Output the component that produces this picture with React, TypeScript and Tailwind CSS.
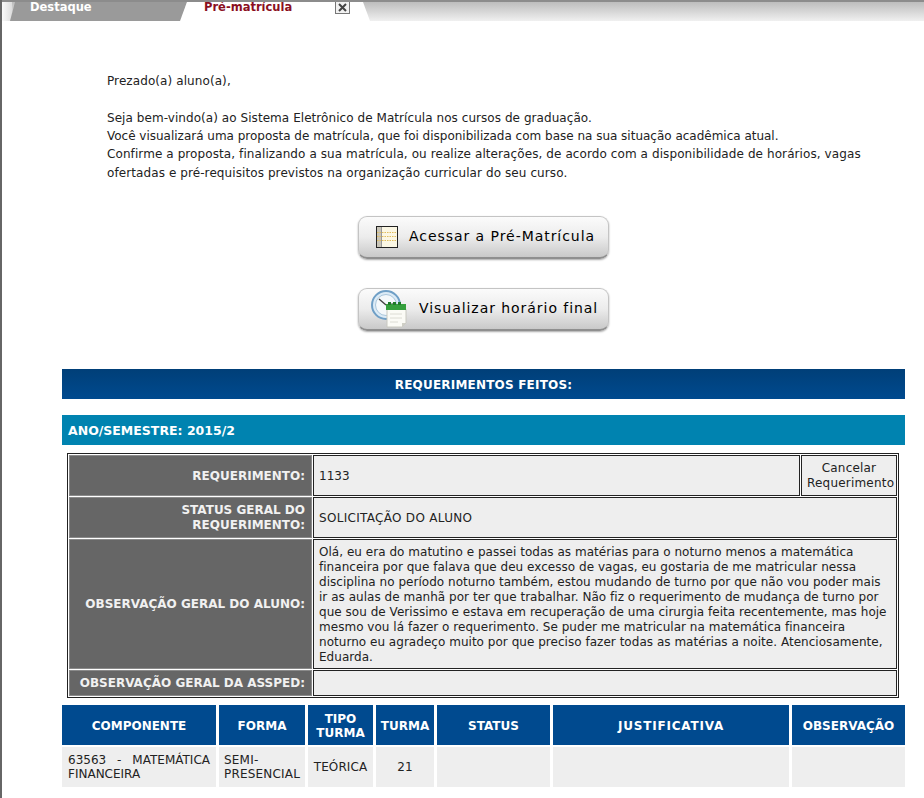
import React from 'react';

const font = { fontFamily: '"DejaVu Sans", Verdana, sans-serif' };

const NotebookIcon = () => (
  <svg width="22" height="22" viewBox="0 0 22 22" className="shrink-0">
    <rect x="0.5" y="0.5" width="21" height="21" fill="#fbf7e4" stroke="#222" />
    <rect x="1" y="1" width="4" height="20" fill="#c9c5b8" />
    <path d="M1 6.5h20M1 10.5h20M1 14.5h20" stroke="#e0bd5c" strokeDasharray="1.5 1" />
    <path d="M5.5 1v20" stroke="#999" />
  </svg>
);

const ClockCalendarIcon = () => (
  <svg width="36" height="38" viewBox="0 0 36 38" className="shrink-0">
    <circle cx="15" cy="15" r="14" fill="#dcebf6" stroke="#6f9fc6" strokeWidth="2" />
    <circle cx="15" cy="15" r="10.5" fill="#f4f8fb" stroke="#a9c6dc" />
    <path d="M15 15L8 9M15 15l8-1" stroke="#444" strokeWidth="1.4" />
    <path d="M16 19h19v14l-4 4H16z" fill="#fbfbf6" stroke="#c8c8c0" />
    <path d="M15 14h20v6H15z" fill="#35a03e" />
    <path d="M17 12h3v3h-3zM22 12h3v3h-3zM27 12h3v3h-3z" fill="#1f7a2a" />
    <path d="M19 24h12M19 28h12M19 32h8" stroke="#dcdcd4" />
    <path d="M31 37v-4h4z" fill="#cfcfc6" />
  </svg>
);

const MenuButton = ({ icon, label, iconClass, gap }: { icon: React.ReactNode; label: string; iconClass: string; gap: string }) => (
  <button className="w-[251px] h-[43px] flex items-center rounded-[9px] border border-[#c4c4c4] border-b-[#8f8f8f] border-b-2 bg-gradient-to-b from-[#fbfbfb] via-[#ececec] to-[#c9c9c9] shadow-[0_1px_2px_rgba(0,0,0,0.35)]">
    <span className={iconClass}>{icon}</span>
    <span className={`${gap} text-[14px] tracking-[0.95px] text-black whitespace-nowrap`}>{label}</span>
  </button>
);

const columns = [
  { title: 'COMPONENTE', extra: '' },
  { title: 'FORMA', extra: '' },
  { title: 'TIPO TURMA', extra: '' },
  { title: 'TURMA', extra: '' },
  { title: 'STATUS', extra: '' },
  { title: 'JUSTIFICATIVA', extra: 'tracking-[0.8px]' },
  { title: 'OBSERVAÇÃO', extra: '' },
];

const labelCell = 'bg-[#666666] text-[#f1f1f1] font-bold text-right align-middle pl-[5px] pr-[6px] pt-[2px] leading-[15px] border border-[#8a8a8a]';
const valueCell = 'bg-[#eeeeee] text-[#222] align-middle px-[5px] pt-[2px] border border-[#222]';

export default function App() {
  return (
    <div className="min-h-screen w-[924px] h-[798px] overflow-hidden bg-white text-[12px] border-l-2 border-[#666]" style={font}>
      <div className="flex h-[21px] border-t-2 border-[#8c8c8c] bg-gradient-to-b from-[#bdbdbd] to-[#f0f0f0] -ml-[2px] relative">
        <div className="w-[12px] bg-gradient-to-r from-[#ffffff] to-[#dddddd]" />
        <div className="w-[177px] bg-[#9a9a9a] [clip-path:polygon(0_100%,5px_0,100%_0,calc(100%-6px)_100%)] -ml-[2px] text-white font-bold text-[11.5px] pl-[20px] leading-[10px]">
          Destaque
        </div>
        <div className="relative w-[190px] bg-white [clip-path:polygon(0_100%,7px_0,calc(100%-7px)_0,100%_100%)] -ml-[7px] text-[#8b0f1f] font-bold text-[11.5px] pl-[24px] leading-[10px]">
          Pré-matrícula
          <span className="absolute left-[155px] top-0 w-[15px] h-[12px] border border-[#777] border-t-0 bg-[#f2f2f2] flex items-center justify-center">
            <svg width="9" height="9" viewBox="0 0 9 9">
              <path d="M1 1l7 7M8 1L1 8" stroke="#444" strokeWidth="2" />
            </svg>
          </span>
        </div>
      </div>

      <div className="pl-[105px] pr-[60px] pt-[51px] leading-[18.3px] text-[#222] tracking-[0.09px]">
        <p>Prezado(a) aluno(a),</p>
        <p className="mt-[18.5px] tracking-[0.06px]">Seja bem-vindo(a) ao Sistema Eletrônico de Matrícula nos cursos de graduação.</p>
        <p className="tracking-[-0.01px]">Você visualizará uma proposta de matrícula, que foi disponibilizada com base na sua situação acadêmica atual.</p>
        <p>
          Confirme a proposta, finalizando a sua matrícula, ou realize alterações, de acordo com a disponibilidade de horários, vagas
          ofertadas e pré-requisitos previstos na organização curricular do seu curso.
        </p>
      </div>

      <div className="flex flex-col gap-[29px] pl-[356px] mt-[34px]">
        <MenuButton icon={<NotebookIcon />} label="Acessar a Pré-Matrícula" iconClass="ml-[17px]" gap="ml-[11px]" />
        <MenuButton icon={<ClockCalendarIcon />} label="Visualizar horário final" iconClass="ml-[12px]" gap="ml-[12px]" />
      </div>

      <div className="ml-[60px] w-[843px] mt-[38px]">
        <div className="h-[30px] flex items-center justify-center pt-[2px] bg-gradient-to-b from-[#003f78] to-[#004a8f] text-white font-bold tracking-[0.2px]">
          REQUERIMENTOS FEITOS:
        </div>
        <div className="h-[30px] mt-[16px] flex items-center pl-[6px] pt-[2px] bg-[#0083b0] text-white font-bold text-[12.5px]">
          ANO/SEMESTRE: 2015/2
        </div>

        <div className="ml-[5px] w-[832px] mt-[8px] border border-[#222]">
          <table className="w-full h-[242px] border-separate border-spacing-[1px] table-fixed">
            <tbody>
              <tr className="h-[41px]">
                <td className={`${labelCell} w-[243px]`}>REQUERIMENTO:</td>
                <td className={valueCell}>1133</td>
                <td className={`${valueCell} w-[96px] text-center leading-[15px] px-0 tracking-[0.2px]`}>Cancelar Requerimento</td>
              </tr>
              <tr className="h-[41px]">
                <td className={labelCell}>STATUS GERAL DO REQUERIMENTO:</td>
                <td className={`${valueCell} tracking-[0.3px]`} colSpan={2}>SOLICITAÇÃO DO ALUNO</td>
              </tr>
              <tr className="h-[130px]">
                <td className={labelCell}>OBSERVAÇÃO GERAL DO ALUNO:</td>
                <td className={`${valueCell} leading-[15.1px] tracking-[0.03px]`} colSpan={2}>
                  Olá, eu era do matutino e passei todas as matérias para o noturno menos a matemática financeira por que falava que deu excesso de vagas, eu gostaria de me matricular nessa disciplina no período noturno também, estou mudando de turno por que não vou poder mais ir as aulas de manhã por ter que trabalhar. Não fiz o requerimento de mudança de turno por que sou de Verissimo e estava em recuperação de uma cirurgia feita recentemente, mas hoje mesmo vou lá fazer o requerimento. Se puder me matricular na matemática financeira noturno eu agradeço muito por que preciso fazer todas as matérias a noite. Atenciosamente, Eduarda.
                </td>
              </tr>
              <tr className="h-[26px]">
                <td className={labelCell}>OBSERVAÇÃO GERAL DA ASSPED:</td>
                <td className={valueCell} colSpan={2}></td>
              </tr>
            </tbody>
          </table>
        </div>

        <div className="grid grid-cols-[154px_86px_65px_58px_113px_236px_113px] gap-x-[3px] gap-y-[2px] mt-[7px]">
          {columns.map((col) => (
            <div key={col.title} className={`h-[40px] pt-[2px] bg-[#004a8f] text-white font-bold text-center flex items-center justify-center leading-[14px] ${col.extra}`}>
              {col.title}
            </div>
          ))}
          <div className="h-[40px] bg-[#eeeeee] text-[#222] px-[6px] flex items-center leading-[14px]">
            <p className="w-full text-justify">63563 - MATEMÁTICA FINANCEIRA</p>
          </div>
          <div className="h-[40px] bg-[#eeeeee] text-[#222] px-[5px] flex items-center leading-[14px] tracking-[0.2px]">SEMI-PRESENCIAL</div>
          <div className="h-[40px] bg-[#eeeeee] text-[#222] flex items-center justify-center tracking-[0.1px]">TEÓRICA</div>
          <div className="h-[40px] bg-[#eeeeee] text-[#222] flex items-center justify-center">21</div>
          <div className="h-[40px] bg-[#eeeeee]" />
          <div className="h-[40px] bg-[#eeeeee]" />
          <div className="h-[40px] bg-[#eeeeee]" />
        </div>
      </div>
    </div>
  );
}
